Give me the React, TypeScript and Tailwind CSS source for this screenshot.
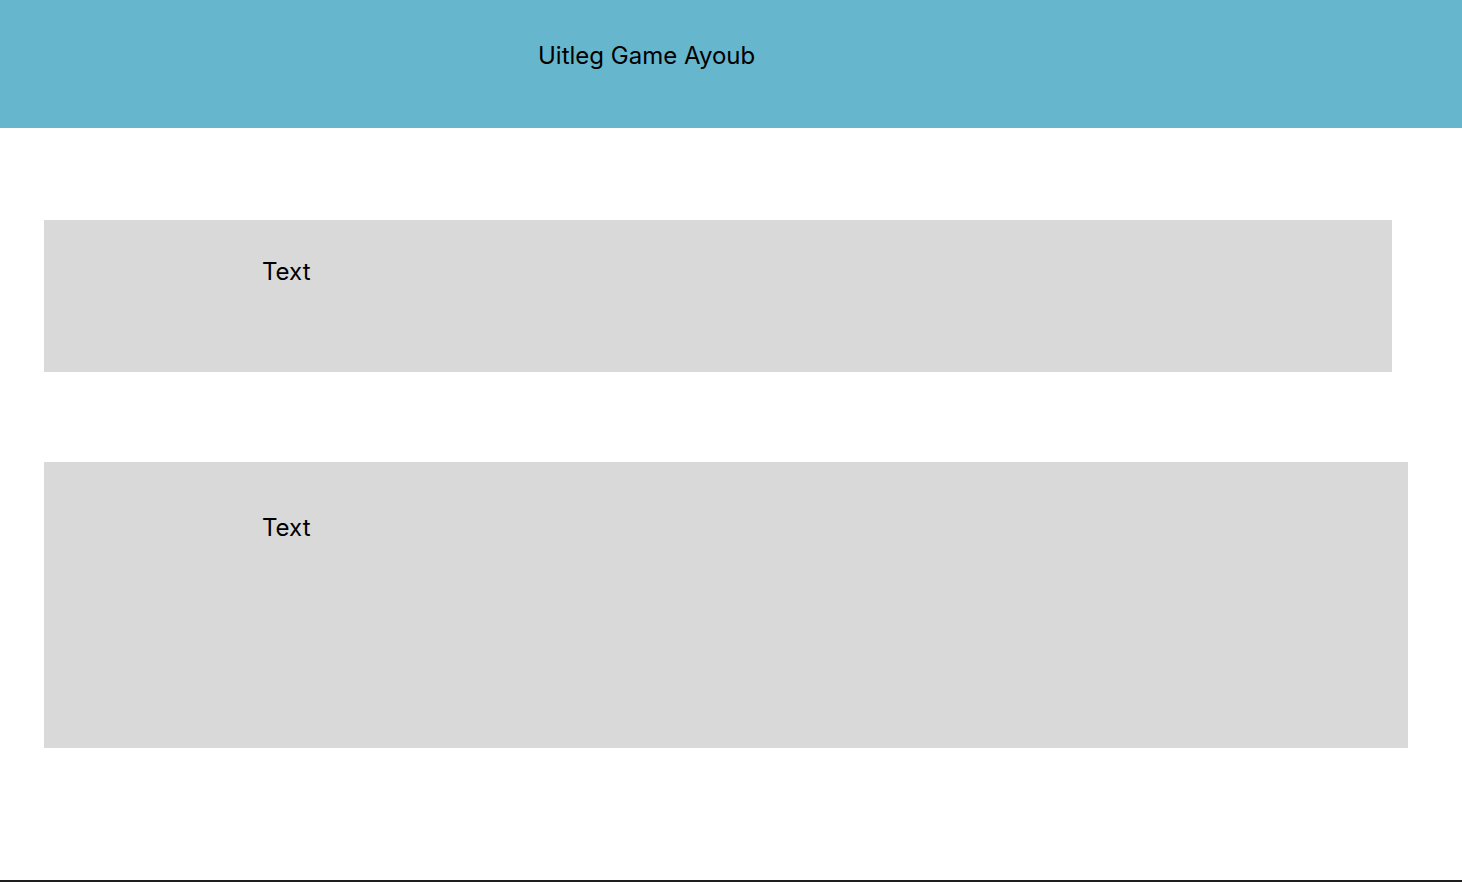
export default function App() {
  return (
    <div
      className="flex h-[882px] flex-col border-b-2 border-[#1e1e1e] bg-white text-black"
      style={{ fontFamily: "Inter, 'Noto Sans', sans-serif" }}
    >
      {/* header */}
      <header className="h-[128px] shrink-0 bg-[#66b6ce] pl-[538px] pt-[41px]">
        <h1 className="text-[24px] leading-[29px] font-normal">Uitleg Game Ayoub</h1>
      </header>

      <main className="flex flex-col pl-[44px] pt-[92px]">
        <section className="h-[152px] w-[1348px] bg-[#d9d9d9] pl-[218px] pt-[37px]">
          <p className="text-[24px] leading-[29px]">Text</p>
        </section>
        <section className="mt-[90px] h-[286px] w-[1364px] bg-[#d9d9d9] pl-[218px] pt-[51px]">
          <p className="text-[24px] leading-[29px]">Text</p>
        </section>
      </main>
    </div>
  );
}
